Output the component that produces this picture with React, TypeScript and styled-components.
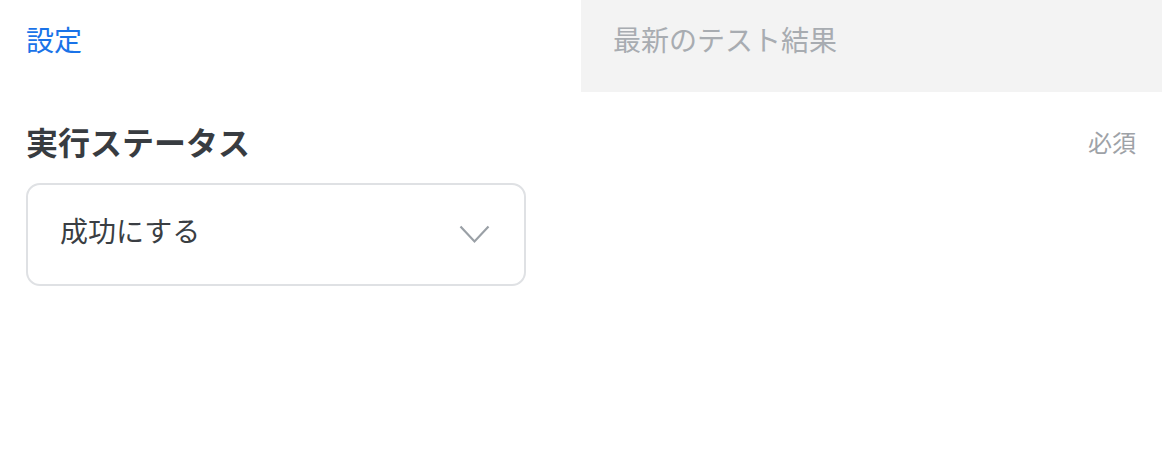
import React from 'react';
import styled, { createGlobalStyle } from 'styled-components';

const GlobalStyle = createGlobalStyle`
  html, body {
    margin: 0;
    padding: 0;
    background: #ffffff;
    font-family: "Noto Sans CJK JP", "Noto Sans", sans-serif;
  }
`;

const Page = styled.div`
  width: 1162px;
  min-height: 472px;
  background: #ffffff;
`;

const Tabs = styled.div`
  display: flex;
  height: 92px;
`;

const Tab = styled.div<{ $active?: boolean }>`
  display: flex;
  align-items: center;
  box-sizing: border-box;
  font-size: 28px;
  line-height: 1;
  padding-bottom: 15px;
  ${(p) =>
    p.$active
      ? `
    width: 581px;
    padding-left: 26px;
    color: #1a73e8;
    background: #ffffff;
  `
      : `
    flex: 1;
    padding-left: 32px;
    color: #a8acb1;
    background: #f3f3f3;
  `}
`;

const Field = styled.section`
  padding: 28px 26px 0 26px;
`;

const FieldHeader = styled.div`
  display: flex;
  justify-content: space-between;
  align-items: center;
  height: 46px;
  padding-bottom: 4px;
  box-sizing: border-box;
`;

const Label = styled.div`
  font-size: 32px;
  font-weight: 700;
  color: #383c41;
`;

const Required = styled.div`
  font-size: 24px;
  color: #9ea2a7;
`;

const Select = styled.div`
  margin-top: 17px;
  width: 500px;
  height: 103px;
  box-sizing: border-box;
  border: 2px solid #dfe1e4;
  border-radius: 14px;
  display: flex;
  align-items: center;
  justify-content: space-between;
  padding: 0 34px 0 32px;
  font-size: 28px;
  color: #3a3e43;
`;

const SelectValue = styled.span`
  line-height: 1;
  padding-bottom: 9px;
`;

const Chevron = () => (
  <svg width="31" height="19" viewBox="0 0 31 19" fill="none">
    <path d="M1.5 1.5 L15.5 16.5 L29.5 1.5" stroke="#9aa0a6" strokeWidth="2.2" />
  </svg>
);

export default function App() {
  return (
    <Page>
      <GlobalStyle />
      <Tabs>
        <Tab $active>設定</Tab>
        <Tab>最新のテスト結果</Tab>
      </Tabs>
      <Field>
        <FieldHeader>
          <Label>実行ステータス</Label>
          <Required>必須</Required>
        </FieldHeader>
        <Select>
          <SelectValue>成功にする</SelectValue>
          <Chevron />
        </Select>
      </Field>
    </Page>
  );
}
